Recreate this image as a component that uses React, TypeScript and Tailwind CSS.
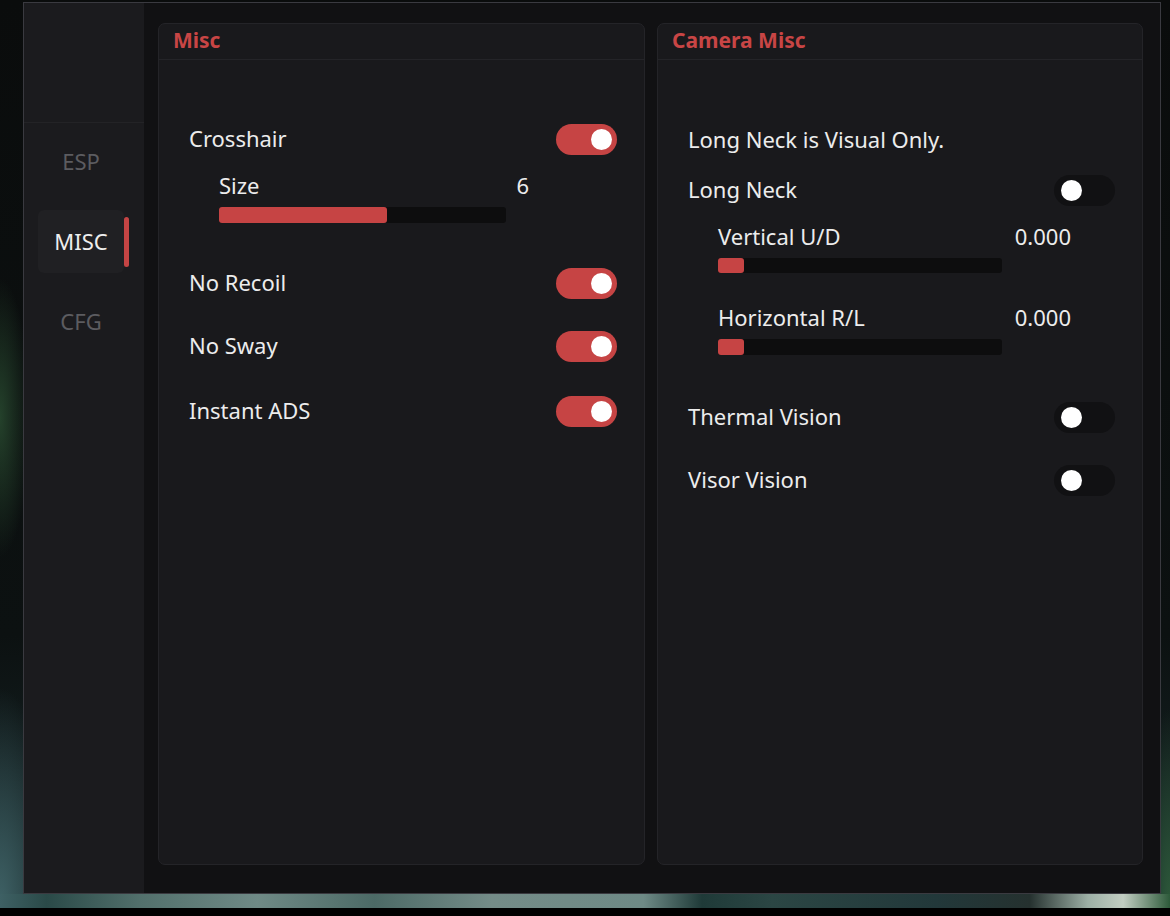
import React from "react"

/* ── Small building blocks ─────────────────────────────────────────────── */
function Toggle({ on }: { on: boolean }) {
  return (
    <div
      className={
        on
          ? "flex h-[31px] w-[61px] items-center justify-end rounded-full bg-[#c64444] pr-[5px]"
          : "flex h-[31px] w-[61px] items-center justify-start rounded-full bg-[#111113] pl-[7px]"
      }
    >
      <div className="h-[21px] w-[21px] rounded-full bg-white" />
    </div>
  )
}

function ToggleRow({ label, on, className = "" }: { label: string; on: boolean; className?: string }) {
  return (
    <div className={`flex h-[31px] items-center justify-between ${className}`}>
      <span className="pb-[4px] text-[22px] leading-[24px] text-[#ececec]">{label}</span>
      <Toggle on={on} />
    </div>
  )
}

function Slider({
  label,
  value,
  rowW,
  trackW,
  trackH,
  fillW,
  className = "",
}: {
  label: string
  value: string
  rowW: string
  trackW: string
  trackH: string
  fillW: number
  className?: string
}) {
  return (
    <div className={`ml-[30px] ${className}`}>
      <div className={`flex h-[24px] items-start justify-between ${rowW}`}>
        <span className="-mt-[1px] text-[22px] leading-[24px] text-[#ececec]">{label}</span>
        <span className="-mt-[1px] text-[22px] leading-[24px] text-[#ececec]">{value}</span>
      </div>
      <div className={`mt-[9px] rounded-[3px] bg-[#0d0d0e] ${trackW} ${trackH}`}>
        <div className="h-full rounded-[3px] bg-[#c64444]" style={{ width: fillW }} />
      </div>
    </div>
  )
}

function Card({ title, className = "", children }: { title: string; className?: string; children: React.ReactNode }) {
  return (
    <div className={`flex flex-col rounded-[7px] border border-[#242428] bg-[#19191c] ${className}`}>
      <div className="flex h-[36px] items-center border-b border-[#242428] px-[14px]">
        <span className="pb-[2px] text-[21px] font-bold leading-none text-[#c84545]">{title}</span>
      </div>
      <div className="flex flex-col pl-[30px] pr-[27px]">{children}</div>
    </div>
  )
}

/* ── Sidebar tabs ──────────────────────────────────────────────────────── */
function Tab({ label, active }: { label: string; active?: boolean }) {
  if (active) {
    return (
      <div className="flex items-center">
        <div className="ml-[14px] flex h-[63px] w-[86px] items-center justify-center rounded-[6px] bg-[#202023] text-[22px] text-[#eeeeee]">
          {label}
        </div>
        <div className="h-[50px] w-[5px] rounded-full bg-[#c44444]" />
      </div>
    )
  }
  return (
    <div className="ml-[14px] flex h-[63px] w-[86px] items-center justify-center text-[22px] text-[#5c5c60]">
      {label}
    </div>
  )
}

/* ── App ───────────────────────────────────────────────────────────────── */
export default function App() {
  return (
    <div
      className="flex h-[916px] w-[1170px] flex-col overflow-hidden bg-black"
      style={{ fontFamily: '"Noto Sans", "DejaVu Sans", sans-serif' }}
    >
      <div className="flex h-[908px] flex-col bg-[radial-gradient(ellipse_30px_140px_at_0%_46%,#24412b_0%,transparent_100%),radial-gradient(ellipse_60px_220px_at_0%_100%,#3f6266_0%,transparent_100%),radial-gradient(ellipse_30px_200px_at_100%_100%,#2d5a3a_0%,transparent_100%),linear-gradient(180deg,#0a0c0c_0%,#0c1111_70%,#18292b_100%)]">
        <div className="flex h-[894px]">
          <div className="w-[23px] shrink-0" />
          <div className="mt-[2px] flex h-[892px] w-[1138px] shrink-0 border border-[#3a3a40]">
            {/* sidebar */}
            <div className="flex w-[120px] shrink-0 flex-col bg-[#1b1b1e]">
              <div className="h-[120px] border-b border-[#232326]" />
              <div className="mt-[7px] flex flex-col gap-[17px]">
                <Tab label="ESP" />
                <Tab label="MISC" active />
                <Tab label="CFG" />
              </div>
            </div>

            {/* main */}
            <div className="flex flex-1 gap-[12px] bg-[#111113] pb-[28px] pl-[14px] pr-[17px] pt-[20px]">
              <Card title="Misc" className="w-[487px] shrink-0">
                <ToggleRow label="Crosshair" on className="mt-[64px]" />
                <Slider
                  label="Size"
                  value="6"
                  rowW="w-[310px]"
                  trackW="w-[287px]"
                  trackH="h-[16px]"
                  fillW={168}
                  className="mt-[19px]"
                />
                <ToggleRow label="No Recoil" on className="mt-[45px]" />
                <ToggleRow label="No Sway" on className="mt-[32px]" />
                <ToggleRow label="Instant ADS" on className="mt-[34px]" />
              </Card>

              <Card title="Camera Misc" className="flex-1">
                <div className="mt-[67px] h-[24px] text-[22px] leading-[24px] text-[#ececec]">
                  Long Neck is Visual Only.
                </div>
                <ToggleRow label="Long Neck" on={false} className="mt-[24px]" />
                <Slider
                  label="Vertical U/D"
                  value="0.000"
                  rowW="w-[353px]"
                  trackW="w-[284px]"
                  trackH="h-[15px]"
                  fillW={26}
                  className="mt-[19px]"
                />
                <Slider
                  label="Horizontal R/L"
                  value="0.000"
                  rowW="w-[353px]"
                  trackW="w-[284px]"
                  trackH="h-[16px]"
                  fillW={26}
                  className="mt-[33px]"
                />
                <ToggleRow label="Thermal Vision" on={false} className="mt-[47px]" />
                <ToggleRow label="Visor Vision" on={false} className="mt-[32px]" />
              </Card>
            </div>
          </div>
          <div className="flex-1" />
        </div>
        <div className="h-[14px] bg-[linear-gradient(90deg,#3e6064_0%,#2a4a48_4%,#52706c_12%,#6f8a86_22%,#4c6a66_32%,#748c88_42%,#6e8a86_55%,#1f3a38_60%,#2b4644_66%,#22383a_80%,#25312f_88%,#9db0a6_93%,#c2cec2_96%,#2d5a3a_100%)]" />
      </div>
      <div className="h-[8px] bg-black" />
    </div>
  )
}
